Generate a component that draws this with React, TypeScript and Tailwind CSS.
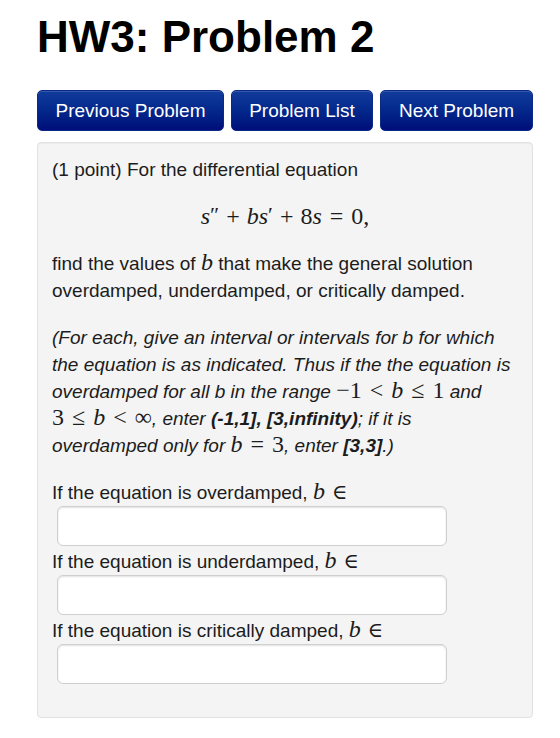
import React from "react";

const M = ({ children, className = "" }: { children: React.ReactNode; className?: string }) => (
  <span className={`font-['Liberation_Serif','Times_New_Roman',serif] text-[24px] leading-[0] not-italic ${className}`}>{children}</span>
);
const V = ({ children }: { children: React.ReactNode }) => <span className="italic">{children}</span>;

const Op = ({ children }: { children: React.ReactNode }) => <span className="mx-[8px]">{children}</span>;

const In = () => (
  <span className="ml-[7px] font-['DejaVu_Serif',serif] text-[21px] leading-[0] font-normal not-italic">∈</span>
);

export default function App() {
  const btn =
    "h-[41px] shrink-0 whitespace-nowrap rounded-[5px] border border-[#0a2a86] bg-gradient-to-b from-[#123c9c] to-[#000d7a] text-white text-[19px] leading-none shadow-[inset_0_1px_0_rgba(255,255,255,0.15)]";
  const input =
    "block ml-[5px] mb-[2px] w-[390px] h-[40px] bg-white border border-[#cfcfcf] rounded-[6px] shadow-[inset_0_1px_2px_rgba(0,0,0,0.12)]";
  return (
    <div className="w-[560px] min-h-[738px] bg-white pl-[37px] pt-[15px] font-['Liberation_Sans',Arial,sans-serif] text-[#1c1c1c]">
      <h1 className="text-[44px] leading-[44px] font-bold text-black whitespace-nowrap">HW3: Problem 2</h1>

      <div className="mt-[31px] flex gap-[7px] w-[496px]">
        <button className={`${btn} w-[187px]`}>Previous Problem</button>
        <button className={`${btn} w-[142px]`}>Problem List</button>
        <button className={`${btn} w-[153px]`}>Next Problem</button>
      </div>

      <div className="mt-[11px] w-[496px] rounded-[4px] border border-[#e2e2e2] bg-[#f4f4f4] px-[14px] pt-[13px] pb-[31px] text-[19px] leading-[27px] shadow-[inset_0_1px_1px_rgba(0,0,0,0.04)]">
        <p className="whitespace-nowrap">(1 point) For the differential equation</p>

        <div className="my-5 text-center whitespace-nowrap font-['Liberation_Serif','Times_New_Roman',serif] text-[24px] leading-[27px]">
          <V>s</V>
          <span className="relative -top-[2px] text-[22px]">″</span>
          <span className="mx-[7px]">+</span>
          <V>bs</V>
          <span className="relative -top-[2px] text-[22px]">′</span>
          <span className="mx-[7px]">+</span>
          8<V>s</V>
          <span className="mx-[8px]">=</span>
          0,
        </div>

        <p>
          <span className="block whitespace-nowrap">
            find the values of <M><V>b</V></M> that make the general solution
          </span>
          <span className="block whitespace-nowrap">overdamped, underdamped, or critically damped.</span>
        </p>

        <p className="mt-5 italic">
          <span className="block whitespace-nowrap">(For each, give an interval or intervals for b for which</span>
          <span className="block whitespace-nowrap">the equation is as indicated. Thus if the the equation is</span>
          <span className="block whitespace-nowrap">
            overdamped for all b in the range{" "}
            <M>
              −1<Op>&lt;</Op>
              <V>b</V>
              <Op>≤</Op>1
            </M>{" "}
            and
          </span>
          <span className="block whitespace-nowrap">
            <M>
              3<Op>≤</Op>
              <V>b</V>
              <Op>&lt;</Op>∞
            </M>
            , enter <b>(-1,1], [3,infinity)</b>; if it is
          </span>
          <span className="block whitespace-nowrap">
            overdamped only for{" "}
            <M>
              <V>b</V>
              <Op>=</Op>3
            </M>
            , enter <b>[3,3]</b>.)
          </span>
        </p>

        <div className="mt-5">
          <p className="whitespace-nowrap">
            If the equation is overdamped, <M><V>b</V></M><In />
          </p>
          <input type="text" className={input} />
          <p className="whitespace-nowrap">
            If the equation is underdamped, <M><V>b</V></M><In />
          </p>
          <input type="text" className={input} />
          <p className="whitespace-nowrap">
            If the equation is critically damped, <M><V>b</V></M><In />
          </p>
          <input type="text" className={input} />
        </div>
      </div>
    </div>
  );
}
